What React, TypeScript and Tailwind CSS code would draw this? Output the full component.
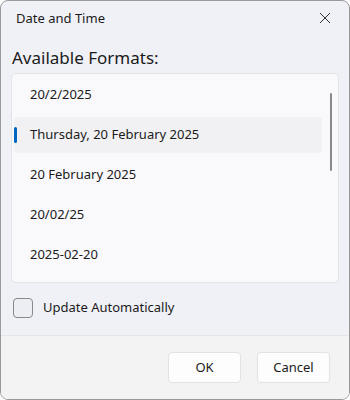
import React from "react";

const items = [
  "20/2/2025",
  "Thursday, 20 February 2025",
  "20 February 2025",
  "20/02/25",
  "2025-02-20",
];

export default function App() {
  return (
    <div
      className="w-[350px] h-[400px] bg-[#f0f1f6] border border-[#9a9a9a] rounded-[8px] overflow-hidden flex flex-col text-[#1b1b1b]"
      style={{ fontFamily: '"Noto Sans", "Segoe UI", sans-serif' }}
    >
      <div className="h-[34px] flex items-center justify-between pl-[15px] pr-[15px] shrink-0">
        <span className="text-[13px] leading-none">Date and Time</span>
        <svg width="12" height="12" viewBox="0 0 12 12" className="mr-[3px]">
          <path d="M1 1 L11 11 M11 1 L1 11" stroke="#333" strokeWidth="1" fill="none" />
        </svg>
      </div>
      <div className="px-[10px] flex flex-col flex-1">
        <div className="text-[17px] leading-none mt-[14px] ml-[1px]">Available Formats:</div>
        <div className="mt-[7px] h-[210px] bg-[#f9f9fb] border border-[#e3e4e8] rounded-[5px] relative pt-[3px] px-[2px] flex flex-col gap-[4px]">
          {items.map((t, i) => (
            <div
              key={t}
              className={
                "relative h-[36px] w-[308px] flex items-center pl-[16px] rounded-[4px] text-[13px] " +
                (i === 1 ? "bg-[#f1f1f3]" : "")
              }
            >
              {i === 1 && (
                <span className="absolute left-0 top-[10px] w-[3px] h-[16px] rounded-full bg-[#0067c0]" />
              )}
              {t}
            </div>
          ))}
          <span className="absolute right-[6px] top-[19px] w-[2px] h-[78px] rounded-full bg-[#8a8a8a]" />
        </div>
        <label className="flex items-center gap-[10px] mt-[15px] ml-[2px]">
          <span className="w-[20px] h-[20px] rounded-[4px] border border-[#8a8a8a] bg-[#eceef3]" />
          <span className="text-[13px]">Update Automatically</span>
        </label>
      </div>
      <div className="h-[64px] shrink-0 bg-[#f3f3f3] border-t border-[#e5e5e5] flex items-start justify-end gap-[16px] pt-[16px] pr-[19px]">
        <button className="w-[73px] h-[31px] bg-[#fdfdfd] border border-[#e2e2e2] rounded-[4px] text-[13px]">
          OK
        </button>
        <button className="w-[73px] h-[31px] bg-[#fdfdfd] border border-[#e2e2e2] rounded-[4px] text-[13px]">
          Cancel
        </button>
      </div>
    </div>
  );
}
